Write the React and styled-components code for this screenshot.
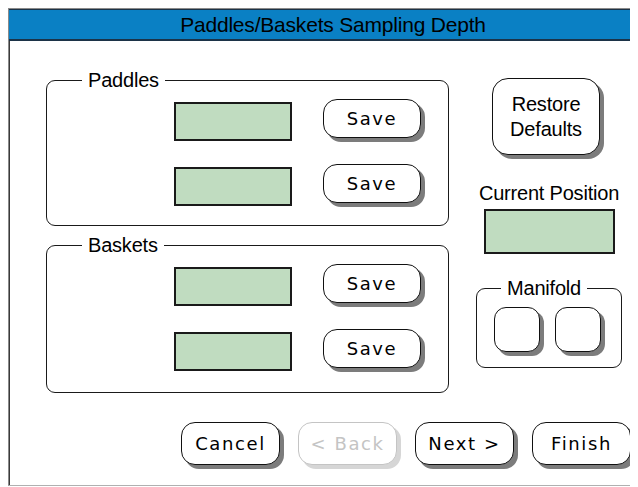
import React from 'react';
import styled, { createGlobalStyle } from 'styled-components';

const GlobalStyle = createGlobalStyle`
  body {
    margin: 8px;
    background: #fff;
    overflow: hidden;
    font-family: "Liberation Sans", Arial, sans-serif;
  }
`;

const green = '#c0dcc0';
const ink = '#1a1a1a';

const Window = styled.div`
  width: 650px;
  height: 478px;
  box-sizing: border-box;
  border: 1px solid #8a8a8a;
  border-bottom-color: #b0b0b0;
  box-shadow: inset 1px 0 0 #3a3a3a;
  display: flex;
  flex-direction: column;
  background: #fff;
`;

const TitleBar = styled.div`
  height: 29px;
  line-height: 29px;
  border-top: 1px solid #1c3348;
  border-bottom: 2px solid #1c3348;
  background: #0a80c4;
  color: #000;
  text-align: center;
  font-size: 21px;
  letter-spacing: -0.2px;
`;

const Main = styled.div`
  display: flex;
  align-items: flex-start;
  padding: 27px 0 0 37px;
`;

const LeftColumn = styled.div`
  display: flex;
  flex-direction: column;
  gap: 19px;
  padding-top: 12px;
`;

// group box: a rounded frame whose caption sits over the top border
const Group = styled.div`
  box-sizing: border-box;
  width: ${({ $w }) => $w}px;
  display: flex;
  flex-direction: column;
  padding-bottom: ${({ $pb }) => $pb}px;
  border: 1px solid ${ink};
  border-radius: 9px;
`;

const Caption = styled.div`
  align-self: flex-start;
  margin: -13px 0 7px ${({ $ml }) => $ml}px;
  padding: 0 6px;
  background: #fff;
  font-size: 20px;
  line-height: 24px;
  letter-spacing: -0.2px;
  color: #000;
`;

const Rows = styled.div`
  display: flex;
  flex-direction: column;
  gap: 23px;
  padding-left: 127px;
`;

const Row = styled.div`
  display: flex;
  align-items: flex-start;
  gap: 31px;
`;

const Field = styled.div`
  box-sizing: border-box;
  width: ${({ $w }) => $w || 118}px;
  height: ${({ $h }) => $h || 39}px;
  margin-top: ${({ $mt }) => $mt ?? 3}px;
  border: 2px solid ${ink};
  background: ${green};
`;

const Button = styled.button`
  box-sizing: border-box;
  width: ${({ $w }) => $w}px;
  height: ${({ $h }) => $h}px;
  padding: 0;
  margin: 0;
  background: #fff;
  color: ${({ disabled }) => (disabled ? '#c4c4c4' : '#000')};
  border: 1px solid ${({ disabled }) => (disabled ? '#c4c4c4' : '#111')};
  border-radius: ${({ $r }) => $r || 14}px;
  box-shadow: 4px 4px 0 ${({ disabled }) => (disabled ? '#d6d6d6' : '#7c7c7c')};
  font-family: "DejaVu Sans", Verdana, sans-serif;
  font-size: 18px;
  letter-spacing: 1.6px;
  cursor: pointer;
`;

const TextButton = styled(Button)`
  font-family: "Liberation Sans", Arial, sans-serif;
  font-size: 20px;
  letter-spacing: -0.2px;
  line-height: 25px;
  margin: 10px 6px 0 0;
`;

const RightColumn = styled.div`
  width: 146px;
  margin-left: 27px;
  display: flex;
  flex-direction: column;
  align-items: center;
`;

const Label = styled.div`
  margin-top: 26px;
  font-size: 20px;
  line-height: 24px;
  letter-spacing: -0.2px;
  color: #000;
`;

const ManifoldWrap = styled.div`
  margin-top: 34px;
`;

const Pair = styled.div`
  display: flex;
  justify-content: center;
  gap: 15px;
  padding-right: 4px;
`;

const Footer = styled.div`
  margin-top: auto;
  display: flex;
  justify-content: flex-end;
  gap: 18px;
  padding: 0 26px 20px 0;
`;

function SaveRow() {
  return (
    <Row>
      <Field />
      <Button $w={98} $h={39}>Save</Button>
    </Row>
  );
}

function DepthGroup({ title, pb }) {
  return (
    <Group $w={403} $pb={pb}>
      <Caption $ml={35}>{title}</Caption>
      <Rows>
        <SaveRow />
        <SaveRow />
      </Rows>
    </Group>
  );
}

export default function App() {
  return (
    <>
      <GlobalStyle />
      <Window>
        <TitleBar>Paddles/Baskets Sampling Depth</TitleBar>
        <Main>
          <LeftColumn>
            <DepthGroup title="Paddles" pb={19} />
            <DepthGroup title="Baskets" pb={21} />
          </LeftColumn>
          <RightColumn>
            <TextButton $w={108} $h={77} $r={16}>
              Restore<br />Defaults
            </TextButton>
            <Label>Current Position</Label>
            <Field $w={131} $h={45} $mt={4} />
            <ManifoldWrap>
              <Group $w={146} $pb={15}>
                <Caption $ml={24}>Manifold</Caption>
                <Pair>
                  <Button $w={46} $h={45} $r={12} aria-label="Manifold 1" />
                  <Button $w={46} $h={45} $r={12} aria-label="Manifold 2" />
                </Pair>
              </Group>
            </ManifoldWrap>
          </RightColumn>
        </Main>
        <Footer>
          <Button $w={99} $h={43}>Cancel</Button>
          <Button $w={99} $h={43} disabled>&lt; Back</Button>
          <Button $w={99} $h={43}>Next &gt;</Button>
          <Button $w={99} $h={43}>Finish</Button>
        </Footer>
      </Window>
    </>
  );
}
